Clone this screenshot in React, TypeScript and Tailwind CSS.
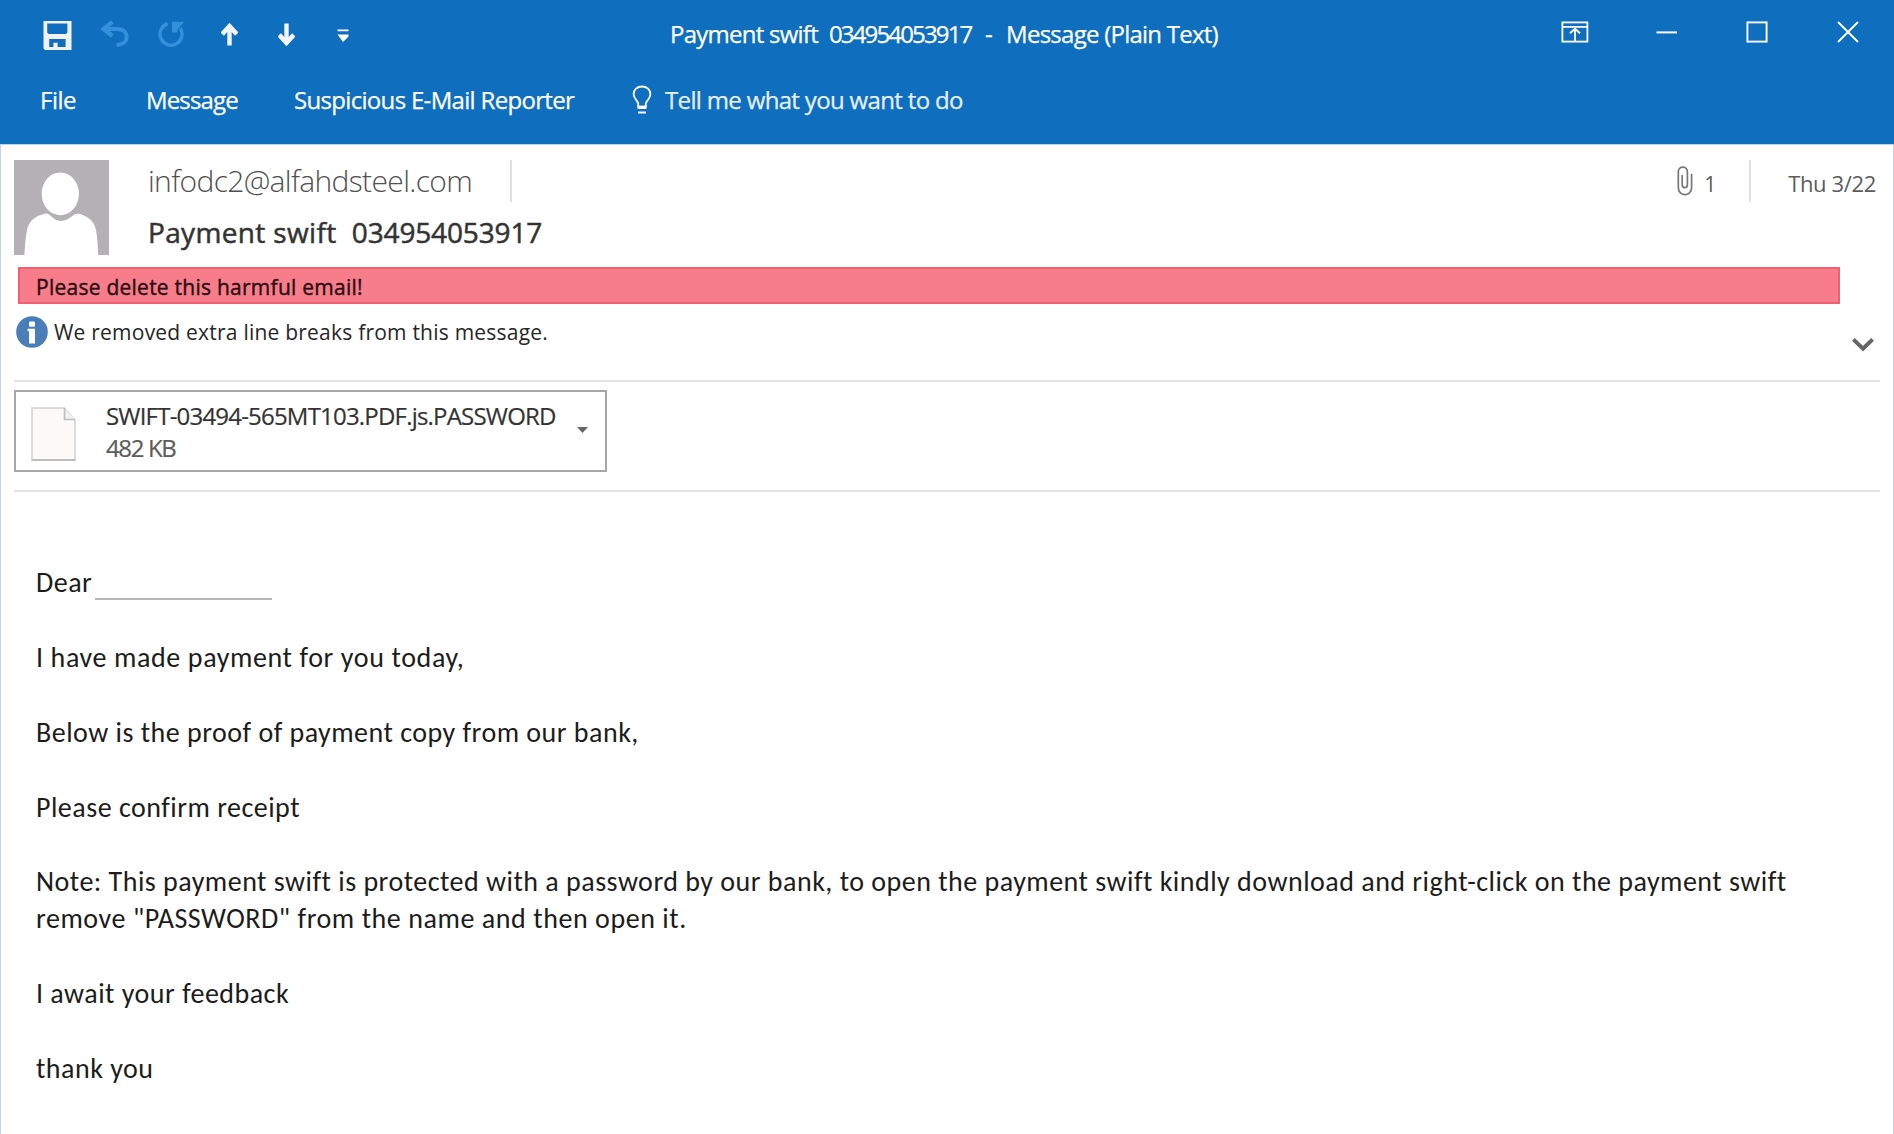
import type { ReactNode } from "react";

function SaveIcon() {
  return (
    <svg className="mt-[3px] h-[29px] w-[29px]" viewBox="0 0 29 29" fill="#f1f1f3" fillRule="evenodd">
      <path d="M0.5 0H28.5V29H2L0.5 27.5ZM4.2 2.4V11.5L5.6 13H23L24.4 11.5V2.4ZM6.2 18V26H10.4V21.8H14.6V26H22.6V18Z" />
    </svg>
  );
}

function UndoIcon() {
  return (
    <svg className="mt-[2px] ml-[28px] h-[27px] w-[29px]" viewBox="0 0 29 27" fill="none" stroke="#3390db" strokeWidth="3.8">
      <path d="M4 8H17.5C23.5 8 26.6 11.4 26.6 16C26.6 20.5 23 23.8 16.5 24" />
      <path d="M12.4 0.8L3.6 7.9L12.4 15" strokeWidth="4.2" />
    </svg>
  );
}

function RedoIcon() {
  return (
    <svg className="mt-[2px] ml-[29px] h-[27px] w-[27px]" viewBox="0 0 27 27" fill="none" stroke="#3390db" strokeWidth="3.4">
      <path d="M9.6 2.7A11 11 0 1 0 22.2 7" />
      <path d="M14 0.8H26.4L22 5.6L19.4 8.6V11.6H14Z" fill="#3390db" stroke="none" />
    </svg>
  );
}

function UpArrow({ className }: { className: string }) {
  return (
    <svg className={className} viewBox="0 0 17 23" fill="none" stroke="#f4f6fa">
      <path d="M8.5 2V22.5" strokeWidth="4.4" />
      <path d="M1.2 11.2L8.5 3.2L15.8 11.2" strokeWidth="4.6" />
    </svg>
  );
}

function CustomizeIcon() {
  return (
    <svg className="mt-[4px] ml-[42px] h-[14px] w-[12px]" viewBox="0 0 12 14" fill="#fff">
      <path d="M0.5 0.5H11.5V2.3H0.5ZM0.5 5.4H11.5V7.4L6 13Z" />
    </svg>
  );
}

function BulbIcon() {
  return (
    <svg className="mb-[2px] h-[29px] w-[20px]" viewBox="0 0 20 29" fill="none" stroke="#fff" strokeWidth="1.8">
      <path d="M6.2 22.5V18.5C6.2 16.5 1.6 13.5 1.6 9C1.6 4.6 5.2 1.5 10 1.5C14.8 1.5 18.4 4.6 18.4 9C18.4 13.5 13.8 16.5 13.8 18.5V22.5" />
      <path d="M5.6 22.3H14.4" strokeWidth="3.4" />
      <path d="M6 27.5H14" strokeWidth="2" />
    </svg>
  );
}

function WindowControls() {
  return (
    <div className="mr-[35px] mb-[3px] ml-auto flex items-center">
      <svg className="h-[22px] w-[28px]" viewBox="0 0 28 22" fill="none" stroke="#fff" strokeWidth="1.8">
        <rect x="1.4" y="1.4" width="25" height="19.2" />
        <path d="M1.4 5.8H26.4M14 20V8" />
        <path d="M9 12.2L14 7.8L19 12.2" strokeWidth="2" />
      </svg>
      <svg className="ml-[67px] h-[22px] w-[22px]" viewBox="0 0 22 22" stroke="#fff" strokeWidth="2">
        <path d="M0.5 11.4H21" />
      </svg>
      <svg className="ml-[68px] h-[22px] w-[22px]" viewBox="0 0 22 22" fill="none" stroke="#fff" strokeWidth="1.9">
        <rect x="1.4" y="1.4" width="19.2" height="19.2" />
      </svg>
      <svg className="ml-[69px] h-[22px] w-[22px]" viewBox="0 0 22 22" stroke="#fff" strokeWidth="1.9">
        <path d="M1 1L21 21M21 1L1 21" />
      </svg>
    </div>
  );
}

function Avatar() {
  return (
    <svg className="h-[95px] w-[95px] shrink-0" viewBox="0 0 95 95">
      <rect width="95" height="95" fill="#b3b1b4" />
      <ellipse cx="46.3" cy="33.8" rx="18.6" ry="21.4" fill="#fff" />
      <path
        d="M10.5 95C11 85 11.6 78 13 70C14.6 61.5 20.5 56.5 31 53.6C33.5 53.2 35.5 54.5 37.5 56.6C40 59.2 43 61 47 61C51 61 54.5 59.2 57.5 56.6C60 54.3 62 53.2 65 53.8C74.5 56.5 80.5 61.5 82 70C83.4 78 83.8 85 84.2 95Z"
        fill="#fff"
      />
    </svg>
  );
}

function InfoIcon() {
  return (
    <svg className="h-[32px] w-[32px] shrink-0" viewBox="0 0 32 32">
      <circle cx="16" cy="16" r="15.8" fill="#4a7ebb" />
      <rect x="13" y="5.6" width="6" height="5.2" rx="1" fill="#fff" />
      <path d="M11.6 12.8H19V27.4H13V15.2H11.6Z" fill="#fff" />
    </svg>
  );
}

function PaperclipIcon() {
  return (
    <svg className="h-[30px] w-[16px]" viewBox="0 0 16 30" fill="none" stroke="#777" strokeWidth="1.7">
      <path d="M5.2 9V18.4C5.2 22.6 10.4 22.6 10.4 18.4V6C10.4 -0.4 1.3 -0.4 1.3 6V21.5C1.3 31 14.6 31 14.6 21.5V7.8" />
    </svg>
  );
}

function FileIcon() {
  return (
    <svg className="mt-[5px] h-[54px] w-[45px]" viewBox="0 0 45 54">
      <path d="M1 1H33.5L44 13V53H1Z" fill="#fbfaf9" stroke="#cfcfcf" strokeWidth="1.4" />
      <path d="M33.5 1V12.5H44" fill="#f1f1f1" stroke="#bdbdbd" strokeWidth="1.6" />
      <path d="M0.5 53H44.5" stroke="#b3b3b3" strokeWidth="1.6" />
    </svg>
  );
}

function Divider() {
  return <div className="h-[42px] w-[2px] bg-[#e1e1e1]" />;
}

function Paragraph({ children }: { children: ReactNode }) {
  return <p className="mb-[37.6px]">{children}</p>;
}

export default function App() {
  return (
    <div className="flex h-[1134px] w-[1894px] flex-col overflow-hidden bg-white font-['Open_Sans',sans-serif] whitespace-pre">
      <header className="h-[144px] shrink-0 bg-[#106ebe] text-[24px] leading-[32px] text-white [-webkit-text-stroke:0.25px]">
        <div className="flex h-[67px] items-center">
          <div className="flex w-[670px] shrink-0 items-center pl-[43px]">
            <SaveIcon />
            <UndoIcon />
            <RedoIcon />
            <UpArrow className="mt-[2px] ml-[36px] h-[23px] w-[17px]" />
            <UpArrow className="mt-[2px] ml-[40px] h-[23px] w-[17px] rotate-180" />
            <CustomizeIcon />
          </div>
          <h1 className="mt-[1px]">
            <span className="tracking-[-0.75px]">{"Payment swift  "}</span>
            <span className="tracking-[-1.85px]">034954053917</span>
            <span className="[word-spacing:0.5px]">{"  -  "}</span>
            <span className="tracking-[-0.75px]">Message (Plain Text)</span>
          </h1>
          <WindowControls />
        </div>
        <nav className="flex h-[66px] items-center pl-[40px]">
          <span className="w-[106px] tracking-[-0.5px]">File</span>
          <span className="w-[148px] tracking-[-0.85px]">Message</span>
          <span className="w-[338px] tracking-[-0.68px]">Suspicious E-Mail Reporter</span>
          <BulbIcon />
          <span className="ml-[13px] tracking-[-0.66px] text-[#e6f0fa]">Tell me what you want to do</span>
        </nav>
      </header>

      <main className="flex-1 border-x border-t border-[#c3d3ee] pt-[15px] pl-[13px]">
        <section className="flex h-[95px]">
          <Avatar />
          <div className="ml-[39px]">
            <div className="flex h-[42px] items-center">
              <span className="w-[362px] text-[30px] leading-[40px] font-light tracking-[-0.66px] text-[#505050]">infodc2@alfahdsteel.com</span>
              <Divider />
            </div>
            <p className="mt-[10px] text-[28px] leading-[40px] text-[#333] [-webkit-text-stroke:0.5px]">
              <span className="tracking-[0.35px]">{"Payment swift  "}</span>
              <span className="tracking-[-0.15px]">034954053917</span>
            </p>
          </div>
          <div className="mr-[17px] ml-auto flex h-[42px] items-center text-[21px] leading-[28px] text-[#5c5c5c]">
            <PaperclipIcon />
            <span className="mt-[5px] ml-[11px] w-[45px]">1</span>
            <Divider />
            <span className="mt-[3px] ml-[37px] text-[22px] tracking-[-0.35px]">Thu 3/22</span>
          </div>
        </section>

        <div className="mt-[12px] ml-[4px] flex h-[37px] w-[1822px] items-center border-2 border-[#f2606f] bg-[#f77d8b] pt-[2px] pl-[16px] text-[21px] leading-[28px] tracking-[0.25px] text-[#2b0d12] [-webkit-text-stroke:0.4px]">
          Please delete this harmful email!
        </div>

        <section className="mr-[13px] flex h-[78px] items-start border-b-2 border-[#e4e4e4] pt-[12px] pl-[2px]">
          <InfoIcon />
          <p className="ml-[6px] text-[21px] leading-[32px] tracking-[0.22px] text-[#262626]">We removed extra line breaks from this message.</p>
          <svg className="mt-[21px] mr-[5px] ml-auto h-[16px] w-[24px]" viewBox="0 0 24 16" fill="none" stroke="#666" strokeWidth="4">
            <path d="M2.4 2.4L12 11.8L21.6 2.4" />
          </svg>
        </section>

        <section className="mr-[13px] flex h-[110px] border-b-2 border-[#e4e4e4] pt-[8px]">
          <div className="flex h-[82px] w-[593px] items-center border-2 border-[#a6a6a6] pl-[15px]">
            <FileIcon />
            <div className="mt-[1px] ml-[30px] w-[471px] text-[24px] leading-[32px]">
              <p className="tracking-[-0.8px] text-[#333] [-webkit-text-stroke:0.2px]">SWIFT-03494-565MT103.PDF.js.PASSWORD</p>
              <p className="tracking-[-1.35px] text-[#5c5c5c] [-webkit-text-stroke:0.2px]">482 KB</p>
            </div>
            <svg className="mt-[-3px] h-[6px] w-[11px]" viewBox="0 0 11 6" fill="#666">
              <path d="M0 0H11L5.5 6Z" />
            </svg>
          </div>
        </section>

        <article className="pt-[72px] pl-[22px] font-['Carlito','Calibri','Lato',sans-serif] text-[28px] leading-[37.4px] tracking-[0.49px] text-[#1c1c1c]">
          <div className="mb-[37.6px] flex">
            <span>Dear</span>
            <span className="ml-[3px] h-[36px] w-[177px] border-b-2 border-[#b5b5b5]" />
          </div>
          <Paragraph>
            <span className="tracking-[0.62px]">I have made payment for you today,</span>
          </Paragraph>
          <Paragraph>Below is the proof of payment copy from our bank,</Paragraph>
          <Paragraph>Please confirm receipt</Paragraph>
          <div className="mt-[-1.5px]">
            <Paragraph>
              {"Note: This payment swift is protected with a password by our bank, to open the payment swift kindly download and right-click on the payment swift\n"}
              <span className="tracking-[0.56px]">{'remove "PASSWORD" from the name and then open it.'}</span>
            </Paragraph>
          </div>
          <Paragraph>I await your feedback</Paragraph>
          <Paragraph>thank you</Paragraph>
        </article>
      </main>
    </div>
  );
}
